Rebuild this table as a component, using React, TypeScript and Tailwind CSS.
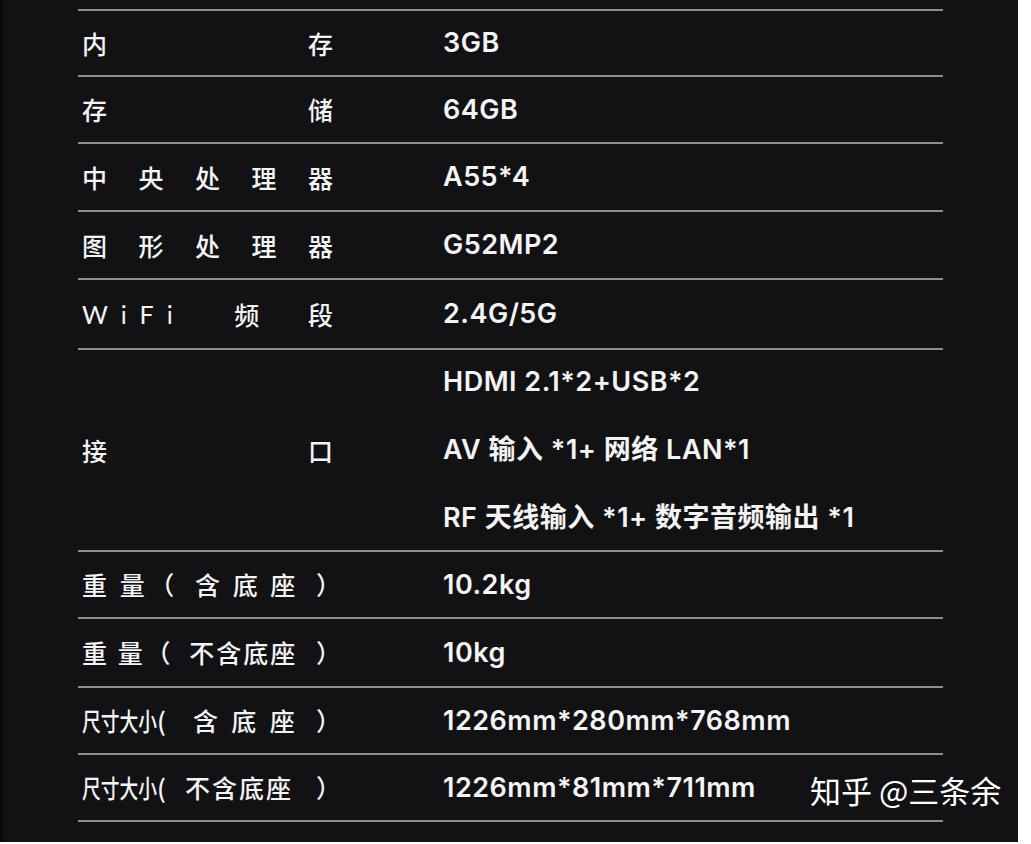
import React from "react";

type Part = { t: string; cls?: string; squeeze?: boolean };
type Row = { label: Part[]; values: string[]; h: string; tail?: Part[]; tailCls?: string };

const cjk = "font-['Noto_Sans_CJK_SC',sans-serif]";
const open = "inline-block -translate-x-[8px]";
const close = "inline-block translate-x-[8px]";

const rows: Row[] = [
  { label: [{ t: "内" }, { t: "存" }], values: ["3GB"], h: "h-[66px]" },
  { label: [{ t: "存" }, { t: "储" }], values: ["64GB"], h: "h-[67px]" },
  {
    label: [{ t: "中" }, { t: "央" }, { t: "处" }, { t: "理" }, { t: "器" }],
    values: ["A55*4"],
    h: "h-[68px]",
  },
  {
    label: [{ t: "图" }, { t: "形" }, { t: "处" }, { t: "理" }, { t: "器" }],
    values: ["G52MP2"],
    h: "h-[68px]",
  },
  {
    label: [
      { t: "WiFi", cls: "tracking-[13px] font-['Lato',sans-serif] font-normal" },
      { t: "频" },
      { t: "段" },
    ],
    values: ["2.4G/5G"],
    h: "h-[70px]",
  },
  {
    label: [{ t: "接" }, { t: "口" }],
    values: [
      "HDMI 2.1*2+USB*2",
      "AV 输入 *1+ 网络 LAN*1",
      "RF 天线输入 *1+ 数字音频输出 *1",
    ],
    h: "h-[202px]",
  },
  {
    label: [
      { t: "重" },
      { t: "量" },
      { t: "（", cls: open },
      { t: "含" },
      { t: "底" },
      { t: "座" },
      { t: "）", cls: close },
    ],
    values: ["10.2kg"],
    h: "h-[67px]",
  },
  {
    label: [
      { t: "重" },
      { t: "量" },
      { t: "（", cls: open },
      { t: "不含底座", cls: "tracking-[2px]" },
      { t: "）", cls: close },
    ],
    values: ["10kg"],
    h: "h-[69px]",
  },
  {
    label: [{ t: "尺寸大小", squeeze: true }, { t: "(" }],
    tailCls: "ml-[27px] flex-1 flex justify-between",
    tail: [{ t: "含" }, { t: "底" }, { t: "座" }, { t: "）", cls: close }],
    values: ["1226mm*280mm*768mm"],
    h: "h-[67px]",
  },
  {
    label: [{ t: "尺寸大小", squeeze: true }, { t: "(" }],
    tailCls: "ml-[19px] flex-1 flex justify-between",
    tail: [{ t: "不含底座", cls: "tracking-[2px]" }, { t: "）", cls: close }],
    values: ["1226mm*81mm*711mm"],
    h: "h-[67px]",
  },
];

function PartSpan({ p }: { p: Part }) {
  if (p.squeeze) {
    return (
      <span className="inline-block w-[75px] whitespace-nowrap">
        <span className="inline-block origin-left scale-x-[0.75]">{p.t}</span>
      </span>
    );
  }
  return <span className={`whitespace-nowrap ${p.cls ?? ""}`}>{p.t}</span>;
}

function Label({ row }: { row: Row }) {
  const base = `flex w-[251px] text-[25px] leading-none font-medium text-[#f4f4f4] ${cjk}`;
  if (row.tail) {
    return (
      <div className={base}>
        {row.label.map((p, i) => (
          <PartSpan key={i} p={p} />
        ))}
        <div className={row.tailCls}>
          {row.tail.map((p, i) => (
            <PartSpan key={i} p={p} />
          ))}
        </div>
      </div>
    );
  }
  return (
    <div className={`${base} justify-between`}>
      {row.label.map((p, i) => (
        <PartSpan key={i} p={p} />
      ))}
    </div>
  );
}

export default function App() {
  return (
    <div className="w-[1031px] h-[844px] bg-white">
      <div className="relative w-[1018px] h-[842px] bg-[#121215] border-l-[3px] border-[#0a0a0c]">
        <div className="pt-[9px] pl-[75px] w-[940px]">
          <div className="border-t-2 border-[#8d8d8f]">
            {rows.map((r, i) => (
              <div
                key={i}
                className={`flex items-center border-b-2 border-[#8d8d8f] ${r.h}`}
              >
                <div className="w-[365px] pl-[4px]">
                  <Label row={r} />
                </div>
                <div className="flex flex-col gap-[40px]">
                  {r.values.map((v, j) => (
                    <div
                      key={j}
                      className="text-[27px] leading-[28px] font-semibold tracking-[0.5px] text-[#f4f4f4] font-['Inter','Noto_Sans_CJK_SC',sans-serif] whitespace-nowrap"
                    >
                      {v}
                    </div>
                  ))}
                </div>
              </div>
            ))}
          </div>
        </div>
        <div className="absolute left-[807px] top-[774px] text-[31px] leading-none text-white font-normal font-['Noto_Sans_CJK_SC',sans-serif] whitespace-nowrap">
          知乎 @三条余
        </div>
      </div>
    </div>
  );
}
